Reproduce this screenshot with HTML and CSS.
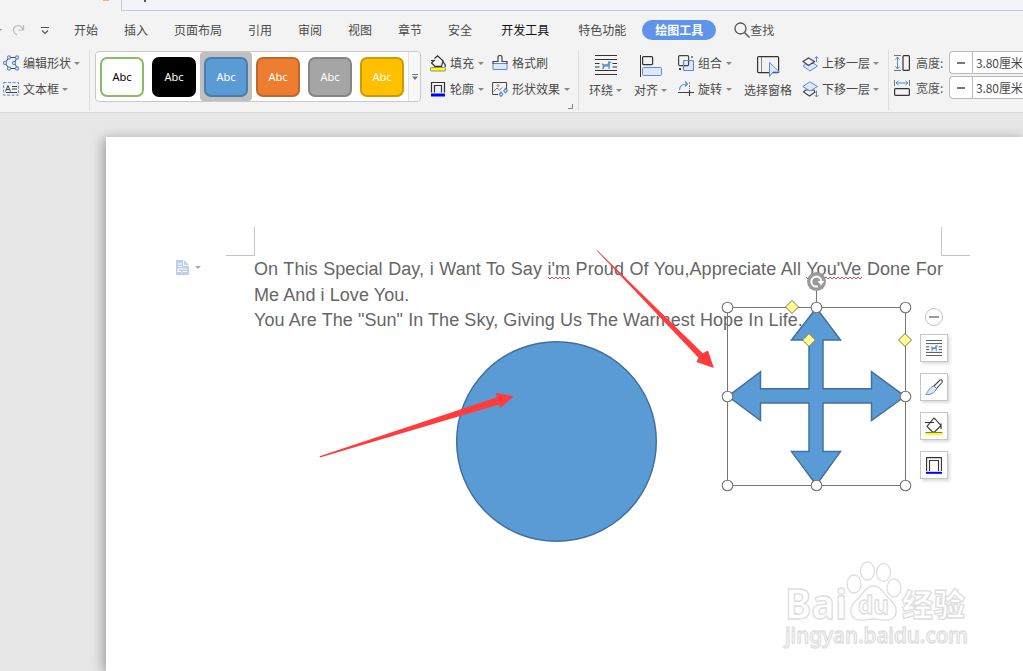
FILE: index.html
```html
<!DOCTYPE html>
<html lang="zh-CN">
<head>
    <meta charset="UTF-8">
    <meta name="viewport" content="width=device-width, initial-scale=1.0">
    <title>绘图工具</title>
    <link rel="stylesheet" href="styles.css">
</head>
<body>
    <!-- 共用图标 -->
    <svg class="defs" width="0" height="0">
        <symbol id="wrap" viewBox="0 0 22 20">
            <path d="M0 .5h22M0 4.500h22M0 15.500h22M0 19.500h22M0 8.500h4.500M0 12h4.500M17.500 8.500H22M17.500 12H22" stroke="#333" stroke-width="1.100" fill="none"/>
            <path d="M6.500 9l1-.8 1 1h4l1-3.200 1.200.8h1.500v1.200h-1.400V14h-1.300v-2.500H9.500L8.800 14H7.200l.6-3.500z" fill="#5b8ad8"/>
        </symbol>
        <symbol id="bucket" viewBox="0 0 16 17">
            <path d="M4.500 3.500L7.500.8l5.500 5-1.500 5.500H5L1.500 8 4.500 5M1 5.500h4M12.500 5.500l2.700 4.500v2" fill="none" stroke="#333" stroke-width="1.200"/>
            <rect x=".5" y="12.500" width="15" height="3.500" rx="1" fill="#ff0" stroke="#777" stroke-width=".8"/>
        </symbol>
        <symbol id="outline" viewBox="0 0 16 16">
            <path d="M1.500 11.500V1.500h13v10M4.500 11.500v-7h7v7" fill="none" stroke="#333" stroke-width="1.200"/>
            <rect x="1" y="12.500" width="14" height="3" fill="#00f"/>
        </symbol>
    </svg>

    <div class="titlebar">
        <div class="title-left"><span class="dot"></span></div>
        <div class="title-right"><span class="stem"></span></div>
    </div>

    <div class="tabs">
        <div class="quick">
            <svg width="60" height="20" viewBox="0 0 60 20">
                <path d="M0 9h2l-1.500 2z" fill="#888"/>
                <path d="M17 15c-4-2-5-7-1-9 4-1.500 6 1 7 4M23.500 5v5h-5" fill="none" stroke="#bbb" stroke-width="1.200"/>
                <path d="M41 7.500h8M42 10.500l3 3 3-3" fill="none" stroke="#555" stroke-width="1.200"/>
            </svg>
        </div>
        <span class="tab">开始</span>
        <span class="tab">插入</span>
        <span class="tab">页面布局</span>
        <span class="tab">引用</span>
        <span class="tab">审阅</span>
        <span class="tab">视图</span>
        <span class="tab">章节</span>
        <span class="tab">安全</span>
        <span class="tab tab-dev">开发工具</span>
        <span class="tab tab-feature">特色功能</span>
        <span class="tab-active">绘图工具</span>
        <span class="search">
            <svg width="16" height="16" viewBox="0 0 16 16"><circle cx="6.500" cy="6.500" r="5.500" fill="none" stroke="#555" stroke-width="1.300"/><path d="M10.500 10.500l5 5" stroke="#555" stroke-width="1.500"/></svg>查找
        </span>
    </div>

    <div class="ribbon">
        <div class="group group-edit">
            <div class="cmd">
                <svg width="17" height="16" viewBox="0 0 17 16"><path d="M6 2.500h8L11.500 8l3 5.500H6L2 8z" fill="none" stroke="#444"/><g fill="#dce8fa" stroke="#5b8ad8" stroke-width="1.100"><circle cx="6" cy="2.500" r="1.600"/><circle cx="14" cy="2.500" r="1.600"/><circle cx="2" cy="8" r="1.600"/><circle cx="11" cy="8" r="1.600"/><circle cx="6" cy="13.500" r="1.600"/><circle cx="14" cy="13.500" r="1.600"/></g></svg>
                编辑形状<i class="caret"></i>
            </div>
            <div class="cmd">
                <svg width="17" height="14" viewBox="0 0 17 14"><rect x=".6" y=".6" width="15" height="12.500" fill="none" stroke="#5b8ad8" stroke-dasharray="3 1.500"/><path d="M2.500 9.500l2.500-6 2.500 6M3.500 7.500h3M9 4.500h5M9 7h5M3 10.500h11" fill="none" stroke="#444"/></svg>
                文本框<i class="caret"></i>
            </div>
        </div>

        <div class="gallery">
            <div class="swatch"><b class="green">Abc</b></div>
            <div class="swatch"><b class="black">Abc</b></div>
            <div class="swatch selected"><b class="blue">Abc</b></div>
            <div class="swatch"><b class="orange">Abc</b></div>
            <div class="swatch"><b class="gray">Abc</b></div>
            <div class="swatch"><b class="yellow">Abc</b></div>
            <div class="more"><svg width="6" height="6" viewBox="0 0 6 6"><path d="M0 .5h6" stroke="#777"/><path d="M0 2.500h6L3 6z" fill="#777"/></svg></div>
        </div>

        <div class="group group-fill">
            <div class="cmd"><svg width="16" height="17"><use href="#bucket"/></svg>填充<i class="caret"></i></div>
            <div class="cmd"><svg width="16" height="16"><use href="#outline"/></svg>轮廓<i class="caret"></i></div>
        </div>
        <div class="group group-effect">
            <div class="cmd">
                <svg width="16" height="16" viewBox="0 0 16 16"><path d="M1 8.500h14v6H1z" fill="#dfe8f7" stroke="#5b8ad8"/><path d="M1 9V6.500h5v-4q0-2 2-2t2 2v4h5V9" fill="none" stroke="#444" stroke-width="1.200"/></svg>
                格式刷
            </div>
            <div class="cmd">
                <svg width="16" height="16" viewBox="0 0 16 16"><path d="M6 13.500H.6V1.500h14V8" fill="none" stroke="#444"/><path d="M1.500 10.500L5 7l2.500 2 3-2.500" fill="none" stroke="#777"/><circle cx="6" cy="4.500" r="1" fill="none" stroke="#777" stroke-width=".8"/><path d="M13.500 7.500l1.800 2.200-1.800 2.200-1.800-2.200zM9 11l1.800 2.200L9 15.400l-1.800-2.200z" fill="#f3f3f3" stroke="#5b8ad8" stroke-width="1.200"/></svg>
                形状效果<i class="caret"></i>
            </div>
            <i class="launcher"></i>
        </div>

        <div class="big big-wrap">
            <svg width="22" height="20"><use href="#wrap"/></svg>
            <span>环绕<i class="caret"></i></span>
        </div>
        <div class="big big-align">
            <svg width="22" height="22" viewBox="0 0 22 22"><path d="M.5 0v22" stroke="#333"/><rect x="2.600" y="1.600" width="10" height="8" rx="1" fill="none" stroke="#333" stroke-width="1.200"/><rect x="2.500" y="12.500" width="19" height="8" rx="1" fill="#dfe8f7" stroke="#5b8ad8"/></svg>
            <span>对齐<i class="caret"></i></span>
        </div>

        <div class="group group-combine">
            <div class="cmd">
                <svg width="16" height="16" viewBox="0 0 16 16"><rect x="5.500" y="5.500" width="10" height="10" rx="1" fill="#dfe8f7" stroke="#5b8ad8" stroke-width="1.200"/><rect x=".6" y=".6" width="10" height="10" rx="1" fill="none" stroke="#444" stroke-width="1.200"/><path d="M5.500 11V5.500H11" fill="none" stroke="#5b8ad8"/><path d="M13 1h2v2h-2z" fill="#5b8ad8"/><path d="M1 13h2v2H1z" fill="#444"/></svg>
                组合<i class="caret"></i>
            </div>
            <div class="cmd">
                <svg width="16" height="16" viewBox="0 0 16 16"><path d="M1.500 9c0-4 3-6 8-6M7 .5L9.500 3 7 5.500" fill="none" stroke="#5b8ad8" stroke-width="1.200"/><path d="M0 11.500h16M11.500 9v6" stroke="#444" stroke-width="1.200"/><path d="M11.500 1v7" stroke="#888" stroke-dasharray="2 1"/></svg>
                旋转<i class="caret"></i>
            </div>
        </div>

        <div class="big big-pane">
            <svg width="23" height="22" viewBox="0 0 23 22"><rect x=".6" y="1.600" width="21" height="16" rx="1" fill="none" stroke="#333" stroke-width="1.200"/><path d="M4.500 2v15" stroke="#888"/><path d="M12.500 7.500v14l3.500-4.500h6.500z" fill="#dfe8f7" stroke="#5b8ad8"/></svg>
            <span>选择窗格</span>
        </div>

        <div class="group group-layer">
            <div class="cmd">
                <svg width="17" height="17" viewBox="0 0 17 17"><path d="M1 11l3.500-2.500H12l3.500 2.500L8 16z" fill="#dfe8f7" stroke="#5b8ad8"/><path d="M1 6.500L6.500 3l6 3.500-6 4z" fill="#f3f3f3" stroke="#444" stroke-width="1.200"/><path d="M14.500 7V1.500M12.500 3.500l2-2 2 2" fill="none" stroke="#5b8ad8"/></svg>
                上移一层<i class="caret"></i>
            </div>
            <div class="cmd">
                <svg width="17" height="17" viewBox="0 0 17 17"><path d="M1.500 11l2-2H12l1 2-5.500 4z" fill="none" stroke="#444" stroke-width="1.200"/><path d="M.8 5.500L8 .8l7.500 4.700L8 10z" fill="#dfe8f7" stroke="#5b8ad8"/><path d="M14.500 9.500V16M12.500 14l2 2 2-2" fill="none" stroke="#5b8ad8"/></svg>
                下移一层<i class="caret"></i>
            </div>
        </div>

        <div class="group group-size">
            <div class="cmd">
                <svg width="16" height="16" viewBox="0 0 16 16"><path d="M0 .5h7M0 15.500h7" stroke="#777"/><path d="M3.500 2v12M1.500 4.500l2-2.500 2 2.500M1.500 11.500l2 2.500 2-2.500" fill="none" stroke="#5b8ad8"/><rect x="9" y=".6" width="6.400" height="14.800" rx="1" fill="none" stroke="#333" stroke-width="1.200"/></svg>
                <span class="label">高度:</span>
                <span class="stepper"><i class="minus"></i><em>3.80厘米</em></span>
            </div>
            <div class="cmd">
                <svg width="16" height="16" viewBox="0 0 16 16"><path d="M.5 0v6M15.500 0v6" stroke="#777"/><path d="M2 3h12M4.500 1L2 3l2.500 2M11.500 1L14 3l-2.500 2" fill="none" stroke="#5b8ad8"/><rect x=".6" y="8.600" width="14.800" height="6.800" rx="1" fill="none" stroke="#333" stroke-width="1.200"/></svg>
                <span class="label">宽度:</span>
                <span class="stepper"><i class="minus"></i><em>3.80厘米</em></span>
            </div>
        </div>
    </div>

    <div class="workspace">
        <div class="page">
            <div class="para-mark">
                <svg width="13" height="15" viewBox="0 0 13 15"><path d="M0 0h8l5 5v10H0z" fill="#bccfeb"/><path d="M7.500 0v5.500H13M2 4h4M2 6.500h4M2 9h9M2 11.500h3l1 1 1-1h4M2 9v2.500" fill="none" stroke="#fff"/></svg>
                <i class="caret"></i>
            </div>
            <div class="text">
                <p class="first">On This Special Day, i Want To Say i'm Proud Of You,Appreciate All You'Ve Done For</p>
                <p>Me And i Love You.</p>
                <p>You Are The "Sun" In The Sky, Giving Us The Warmest Hope In Life.</p>
            </div>
        </div>
    </div>

    <!-- 画布：形状、选框、箭头和水印 -->
    <svg class="canvas" width="1023" height="671" viewBox="0 0 1023 671">
        <path d="M254.500 227v28.500H226M941.500 227v28.500H970" fill="none" stroke="#c4c4c4"/>
        <path d="M548 277l2 2 2-2 2 2 2-2 2 2 2-2 2 2 2-2 2 2 2-2 2 2" fill="none" stroke="#c9343a" stroke-width=".9"/>
        <path d="M806 277l2 2 2-2 2 2 2-2 2 2 2-2 2 2 2-2 2 2 2-2 2 2 2-2 2 2 2-2 2 2 2-2 2 2 2-2 2 2 2-2 2 2 2-2 2 2 2-2 2 2 2-2 2 2 2-2" fill="none" stroke="#c9343a" stroke-width=".9"/>

        <g fill="#5b9bd5" stroke="#41719c" stroke-width="1.500">
            <circle cx="556.500" cy="441.500" r="99.800"/>
            <path d="M816.300 308L840.500 340H823v48.700h48.500V371.700L905 396.300L871.500 420.500V403H823v48.600h17.500L816.300 485L791.500 451.600H809V403h-48.500v17.500L728 396.300L760.500 371.700v17H809V340h-17.500z"/>
        </g>

        <g fill="none" stroke="#767676">
            <rect x="727.500" y="307.500" width="178" height="178"/>
            <path d="M816.500 290v14"/>
        </g>
        <circle cx="816.500" cy="281.500" r="9.500" fill="#999"/>
        <path d="M818 286.300a5 5 0 1 1 3.300-5.300" fill="none" stroke="#fff" stroke-width="2"/>
        <path d="M817.500 281h7l-3.500 4.500z" fill="#fff"/>
        <g fill="#fff" stroke="#767676" stroke-width="1.100">
            <circle cx="727.500" cy="307.500" r="5.300"/>
            <circle cx="816.500" cy="307.500" r="5.300"/>
            <circle cx="905.500" cy="307.500" r="5.300"/>
            <circle cx="727.500" cy="396.500" r="5.300"/>
            <circle cx="905.500" cy="396.500" r="5.300"/>
            <circle cx="727.500" cy="485.500" r="5.300"/>
            <circle cx="816.500" cy="485.500" r="5.300"/>
            <circle cx="905.500" cy="485.500" r="5.300"/>
        </g>
        <g fill="#ffff8f" stroke="#767650">
            <path d="M792 300.500l6.500 6.500-6.500 6.500-6.500-6.500z"/>
            <path d="M809 333.500l6.500 6.500-6.500 6.500-6.500-6.500z"/>
            <path d="M905 333.500l6.500 6.500-6.500 6.500-6.500-6.500z"/>
        </g>

        <g fill="#ff3b3b">
            <path d="M319.500 456.300L497 397.300L496 393L513.700 396.200L500.300 408L499 404.500L320 457.500z"/>
            <path d="M597 250L702.700 353.300L708 350.500L713.900 367.900L696.500 362L698.500 357.700L597 251z"/>
        </g>

        <g class="watermark">
            <text class="wm-bai" x="785" y="618.500" textLength="62" lengthAdjust="spacingAndGlyphs">Bai</text>
            <path d="M873.500 586c8 0 10 8 17 14 8 7 8 19-3 20-5 .5-9-1-14-1s-9 1.500-14 1c-11-1-11-13-3-20 7-6 9-14 17-14z"/>
            <ellipse cx="854" cy="584" rx="7" ry="9"/>
            <ellipse cx="867.500" cy="571" rx="7" ry="9"/>
            <ellipse cx="883.500" cy="572.500" rx="7" ry="9"/>
            <ellipse cx="894" cy="588" rx="7" ry="9"/>
            <text class="wm-du" x="858" y="614" textLength="31" lengthAdjust="spacingAndGlyphs">du</text>
            <text class="wm-cn" x="902" y="616" textLength="63">经验</text>
            <text class="wm-url" x="785" y="643" textLength="183" lengthAdjust="spacingAndGlyphs">jingyan.baidu.com</text>
        </g>
    </svg>

    <div class="float-bar">
        <span class="collapse"></span>
        <span class="float-btn"><svg width="16" height="16" viewBox="0 0 22 20" preserveAspectRatio="none"><use href="#wrap" width="22" height="20"/></svg></span>
        <span class="float-btn"><svg width="18" height="17" viewBox="0 0 18 17"><path d="M9 7l6-6q1.500-.7 2 .5t0 2L11 10z" fill="#fff" stroke="#444" stroke-width="1.100"/><path d="M9 7l2.500 2.500C10 14 5 16 .8 15.500 3 13.500 3 9 9 7z" fill="#dfe8f7" stroke="#5b8ad8"/></svg></span>
        <span class="float-btn"><svg width="18" height="18" viewBox="0 0 18 18"><path d="M9 .8l7 7.700-6.500 6.500h-2L2 9.500 9 .8M0 5.500h9M16 6.500V12" fill="none" stroke="#333" stroke-width="1.100"/><path d="M.5 15.500h17" stroke="#777"/><path d="M.5 17h17" stroke="#ff0" stroke-width="2"/></svg></span>
        <span class="float-btn"><svg width="16" height="17" viewBox="0 0 16 17"><path d="M.6 14V.6h14.800V14M3.500 14V3.500h9V14" fill="none" stroke="#333" stroke-width="1.100"/><path d="M0 15.800h16" stroke="#00f" stroke-width="2"/></svg></span>
    </div>
</body>
</html>
```

FILE: styles.css
```css
* {
    box-sizing: border-box;
}
body {
    margin: 0;
    width: 1023px;
    height: 671px;
    overflow: hidden;
    position: relative;
    display: flex;
    flex-direction: column;
    background-color: #e7e7e7;
    font-family: "Noto Sans CJK SC", sans-serif;
    font-size: 12px;
    color: #4a4a4a;
}
svg {
    display: block;
    flex: none;
}
i, em {
    font-style: normal;
}
.defs {
    position: absolute;
}

/* 标题栏 */
.titlebar {
    display: flex;
    height: 11px;
    flex: none;
    background-color: #f3f3f3;
}
.title-left {
    width: 121px;
    padding-left: 103px;
}
.dot {
    display: block;
    width: 6px;
    height: 1px;
    background-color: #f2b27a;
}
.title-right {
    flex: 1;
    padding-left: 22px;
    background-color: #f3f4f9;
    border-left: 1px solid #c3c8de;
    border-bottom: 1px solid #c3c8de;
}
.stem {
    display: block;
    width: 2px;
    height: 2px;
    background-color: #555;
}

/* 选项卡 */
.tabs {
    display: flex;
    align-items: center;
    height: 38px;
    flex: none;
    background-color: #f3f3f3;
    line-height: 20px;
    white-space: nowrap;
}
.quick {
    width: 74px;
}
.tab {
    margin-right: 26px;
}
.tab:nth-child(9) {
    margin-right: 29px;
}
.tab-dev {
    margin-right: 29px;
    color: #111;
}
.tab-feature {
    margin-right: 16px;
}
.tab-active {
    width: 74px;
    height: 20px;
    margin-right: 18px;
    border-radius: 10px;
    background-color: #6093ea;
    color: #fff;
    font-weight: bold;
    text-align: center;
}
.search {
    display: flex;
    align-items: center;
    color: #555;
}

/* 功能区 */
.ribbon {
    display: flex;
    height: 64px;
    flex: none;
    padding-top: 1px;
    background-color: #f3f3f3;
    border-bottom: 1px solid #d9d9d9;
    white-space: nowrap;
}
.group {
    flex: none;
    height: 61px;
}
.cmd {
    display: flex;
    align-items: center;
    gap: 4px;
    height: 26px;
    line-height: 26px;
}
.caret {
    display: inline-block;
    flex: none;
    width: 0;
    height: 0;
    border: 3px solid transparent;
    border-top-color: #888;
    border-bottom: 0;
}
.group-edit {
    width: 90px;
    padding-left: 3px;
    border-right: 1px solid #dedede;
}
.group-edit .cmd {
    gap: 3px;
}
.gallery {
    display: flex;
    flex: none;
    width: 326px;
    height: 51px;
    margin: 1px 9px 0 5px;
    border: 1px solid #c8c8c8;
    border-radius: 4px;
    background-color: #fff;
}
.swatch {
    display: flex;
    align-items: center;
    justify-content: center;
    width: 52px;
    height: 49px;
}
.selected {
    background-color: #bfbfbf;
    border-radius: 4px;
}
.swatch b {
    width: 44px;
    height: 40px;
    border: 2px solid;
    border-radius: 7px;
    color: #fff;
    font: 11px/36px "Noto Sans", sans-serif;
    text-align: center;
}
.swatch .green {
    border-color: #86bd65;
    color: #000;
}
.swatch .black {
    border-color: #000;
    background-color: #000;
}
.swatch .blue {
    border-color: #4a7dab;
    background-color: #5b9bd5;
}
.swatch .orange {
    border-color: #bf672c;
    background-color: #ed7d31;
}
.swatch .gray {
    border-color: #858585;
    background-color: #a5a5a5;
}
.swatch .yellow {
    border-color: #cd9a00;
    background-color: #ffc000;
}
.more {
    display: flex;
    flex: 1;
    align-items: center;
    justify-content: center;
    border-left: 1px solid #e2e2e2;
    border-radius: 0 4px 4px 0;
    background-color: #f8f8f8;
}
.group-fill {
    width: 62px;
}
.group-effect {
    width: 87px;
    border-right: 1px solid #dedede;
}
.launcher {
    display: block;
    width: 5px;
    height: 5px;
    margin: 2px 0 0 76px;
    border-right: 1px solid #888;
    border-bottom: 1px solid #888;
}
.big {
    display: flex;
    flex: none;
    flex-direction: column;
    align-items: center;
    justify-content: space-between;
    height: 52px;
    padding-top: 5px;
}
.big span {
    display: flex;
    align-items: center;
    gap: 3px;
    line-height: 24px;
}
.big-wrap {
    width: 33px;
    margin-left: 10px;
}
.big-align {
    width: 33px;
    margin-left: 12px;
}
.group-combine {
    width: 66px;
    margin-left: 11px;
}
.big-pane {
    width: 48px;
}
.group-layer {
    width: 97px;
    padding-left: 10px;
    border-right: 1px solid #dedede;
}
.group-layer .cmd {
    gap: 3px;
}
.group-size {
    flex: 1;
    min-width: 0;
    padding-left: 5px;
}
.group-size .cmd {
    height: 25px;
    gap: 6px;
}
.label {
    width: 27px;
    color: #555;
}
.stepper {
    display: flex;
    align-items: center;
    flex: 1;
    min-width: 0;
    height: 23px;
    overflow: hidden;
    border: 1px solid #bbb;
    border-right: 0;
    border-radius: 4px 0 0 4px;
    background-color: #fff;
}
.minus {
    flex: none;
    width: 8px;
    height: 2px;
    margin: 0 7px;
    background-color: #777;
}
.stepper em {
    height: 21px;
    padding-left: 3px;
    border-left: 1px solid #bbb;
    line-height: 21px;
    letter-spacing: -.1px;
}

/* 文档页面 */
.workspace {
    display: flex;
    flex: 1;
    min-height: 0;
    padding: 24px 0 0 106px;
}
.page {
    display: flex;
    flex: 1;
    background-color: #fff;
    box-shadow: -2px 2px 12px rgba(0, 0, 0, .36);
}
.para-mark {
    display: flex;
    align-items: flex-start;
    width: 148px;
    padding: 123px 0 0 70px;
    gap: 6px;
}
.para-mark .caret {
    margin-top: 6px;
    border-top-color: #aaa;
}
.text {
    width: 690px;
    padding-top: 120px;
    font: 18px/25.5px "Liberation Sans", sans-serif;
    letter-spacing: .07px;
    color: #666;
    white-space: nowrap;
}
.text p {
    margin: 0;
}
.text .first {
    width: 689px;
    text-align-last: justify;
}

/* 画布层 */
.canvas {
    position: absolute;
    left: 0;
    top: 0;
}
.watermark {
    fill: #fff;
    stroke: #dedede;
    stroke-width: 1.3px;
}
.wm-bai {
    font: bold 41px "Noto Sans", sans-serif;
}
.wm-du {
    font: bold 25px "Noto Sans", sans-serif;
}
.wm-cn {
    font: 900 31px "Noto Sans CJK SC", sans-serif;
}
.wm-url {
    font: 500 21px "Noto Sans", sans-serif;
}

/* 浮动工具条 */
.float-bar {
    position: absolute;
    left: 920px;
    top: 308px;
    display: flex;
    flex-direction: column;
    align-items: center;
    gap: 11px;
}
.collapse {
    display: flex;
    align-items: center;
    justify-content: center;
    width: 18px;
    height: 18px;
    margin-bottom: -3px;
    border: 1px solid #c4c4c4;
    border-radius: 50%;
    background-color: #fff;
}
.collapse::before {
    content: "";
    width: 10px;
    height: 2px;
    background-color: #999;
}
.float-btn {
    display: flex;
    align-items: center;
    justify-content: center;
    width: 28px;
    height: 28px;
    border: 1px solid #c6c6c6;
    background-color: #fff;
    box-shadow: 2px 2px 3px rgba(0, 0, 0, .14);
}
```
